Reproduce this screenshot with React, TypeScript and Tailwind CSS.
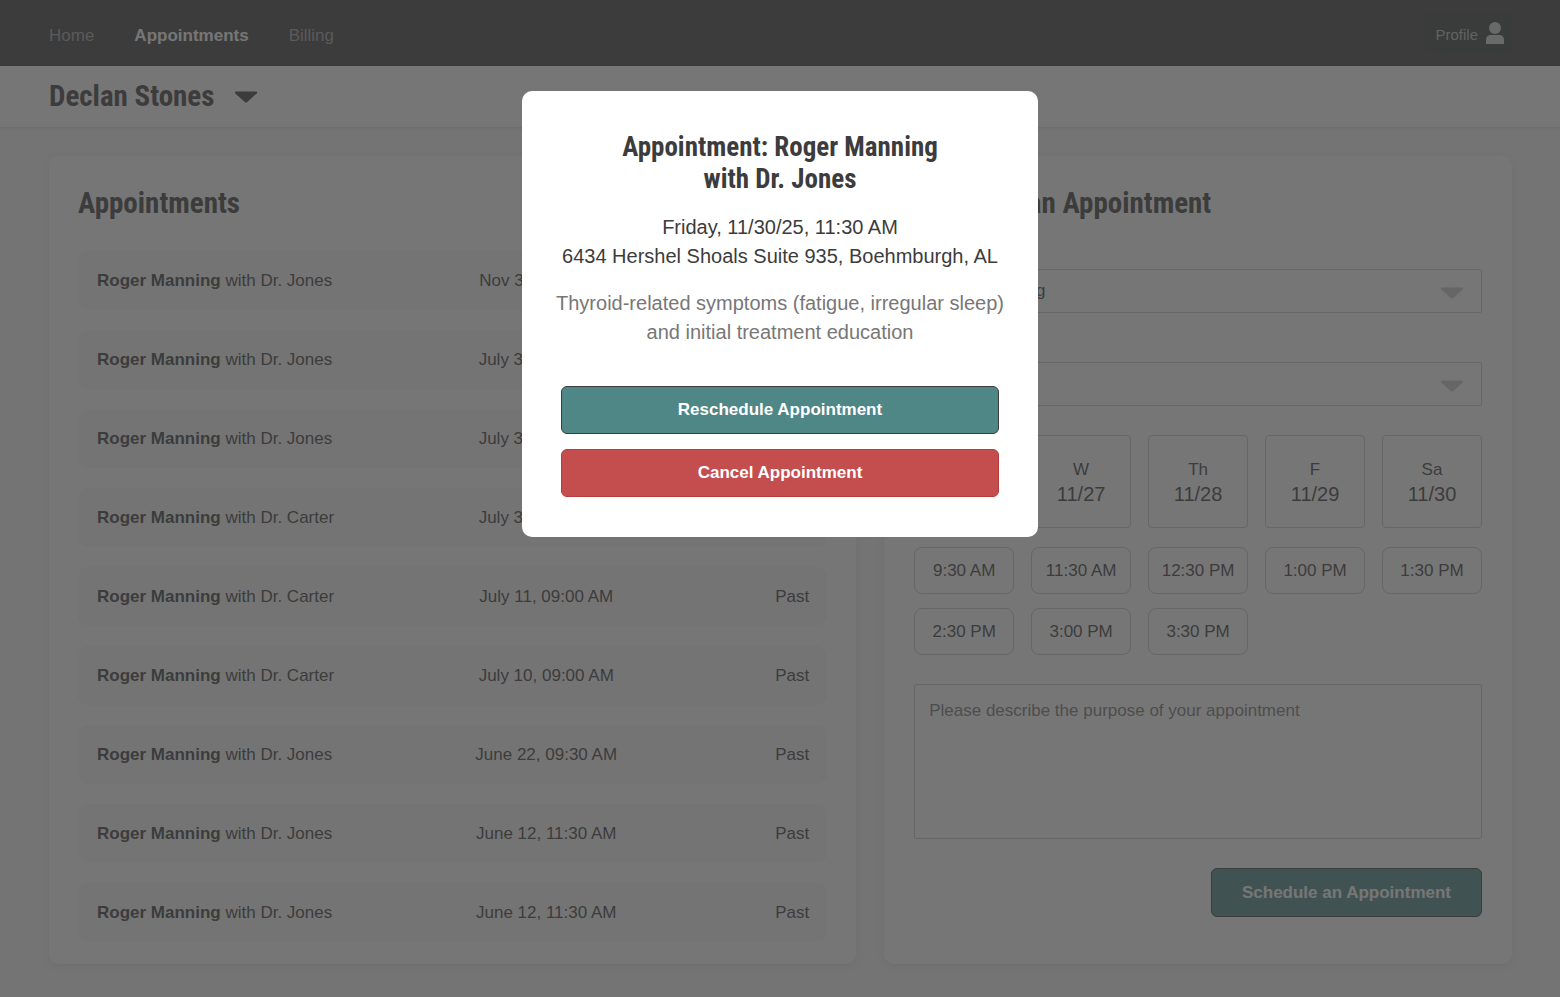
import React, { useState } from 'react';

interface Appointment {
  patient: string;
  doctor: string;
  date: string;
  status: string;
}

const appointments: Appointment[] = [
  { patient: 'Roger Manning', doctor: 'Dr. Jones', date: 'Nov 30, 11:30 AM', status: '' },
  { patient: 'Roger Manning', doctor: 'Dr. Jones', date: 'July 31, 09:00 AM', status: 'Past' },
  { patient: 'Roger Manning', doctor: 'Dr. Jones', date: 'July 31, 09:00 AM', status: 'Past' },
  { patient: 'Roger Manning', doctor: 'Dr. Carter', date: 'July 30, 09:00 AM', status: 'Past' },
  { patient: 'Roger Manning', doctor: 'Dr. Carter', date: 'July 11, 09:00 AM', status: 'Past' },
  { patient: 'Roger Manning', doctor: 'Dr. Carter', date: 'July 10, 09:00 AM', status: 'Past' },
  { patient: 'Roger Manning', doctor: 'Dr. Jones', date: 'June 22, 09:30 AM', status: 'Past' },
  { patient: 'Roger Manning', doctor: 'Dr. Jones', date: 'June 12, 11:30 AM', status: 'Past' },
  { patient: 'Roger Manning', doctor: 'Dr. Jones', date: 'June 12, 11:30 AM', status: 'Past' },
];

const days = [
  { day: 'T', date: '11/26' },
  { day: 'W', date: '11/27' },
  { day: 'Th', date: '11/28' },
  { day: 'F', date: '11/29' },
  { day: 'Sa', date: '11/30' },
];

const times = ['9:30 AM', '11:30 AM', '12:30 PM', '1:00 PM', '1:30 PM', '2:30 PM', '3:00 PM', '3:30 PM'];

const CaretDown: React.FC<{ className?: string }> = ({ className }) => (
  <svg viewBox="0 0 24 12" className={`w-6 h-3 ${className ?? ''}`} fill="currentColor" aria-hidden="true">
    <path d="M2 0.5h20c1.200 0 1.400 1.200 0.700 1.900L13 11.200c-0.600 0.500-1.400 0.500-2 0L1.300 2.400C0.600 1.700 0.800 0.500 2 0.500z" />
  </svg>
);

const Navbar: React.FC = () => (
  <nav className="flex items-center justify-between h-[66px] bg-[#3c3c3c] pl-[49px] pr-12">
    <div className="flex items-center gap-10 pt-[6px] text-[17px] text-[#a0a0a0]">
      <a href="#home">Home</a>
      <a href="#appointments" className="font-bold text-white">Appointments</a>
      <a href="#billing">Billing</a>
    </div>
    <a href="#profile" className="flex items-center gap-2 h-10 pl-[10px] pr-2 rounded-md bg-[#323c38] text-[15px] text-[#bbbbbb]">
      <span className="pt-1">Profile</span>
      <svg viewBox="0 0 18 22" className="w-[18px] h-[22px] text-[#d2d2d2]" fill="currentColor" aria-hidden="true">
        <circle cx="9" cy="6" r="6" />
        <path d="M0 22v-4.500a4.500 4.500 0 0 1 4.500-4.500h9a4.500 4.500 0 0 1 4.500 4.500V22z" />
      </svg>
    </a>
  </nav>
);

const AppointmentList: React.FC = () => (
  <section className="bg-white rounded-[10px] shadow-[0_2px_8px_rgba(0,0,0,0.08)] px-[29px] pt-[29px] pb-5">
    <h2 className="font-['Roboto_Condensed','Liberation_Sans',sans-serif] font-bold text-[29px] leading-9">Appointments</h2>
    <table className="w-full table-fixed border-separate border-spacing-x-0 border-spacing-y-5 mt-[10px] -mb-5">
      <tbody>
        {appointments.map((item, index) => (
          <tr key={index} className="h-[59px]">
            <td className="w-[45%] pl-[19px] bg-[#f7f7f7] rounded-l-[10px]">
              <span className="font-bold">{item.patient}</span> with {item.doctor}
            </td>
            <td className="w-[35%] text-center bg-[#f7f7f7]">{item.date}</td>
            <td className="pr-[18px] text-right bg-[#f7f7f7] rounded-r-[10px]">{item.status}</td>
          </tr>
        ))}
      </tbody>
    </table>
  </section>
);

interface SelectFieldProps {
  label: string;
  options: string[];
}

const SelectField: React.FC<SelectFieldProps> = ({ label, options }) => (
  <div className="relative">
    <select aria-label={label} className="block appearance-none w-full h-11 px-[14px] border border-[#c8c8c8] rounded-xs bg-white">
      {options.map((option) => (
        <option key={option}>{option}</option>
      ))}
    </select>
    <CaretDown className="absolute right-[18px] top-[18px] text-[#c8c8c8] pointer-events-none" />
  </div>
);

const ScheduleForm: React.FC = () => (
  <section className="bg-white rounded-[10px] shadow-[0_2px_8px_rgba(0,0,0,0.08)] px-[30px] pt-[29px] pb-[47px]">
    <h2 className="font-['Roboto_Condensed','Liberation_Sans',sans-serif] font-bold text-[29px] leading-9">Schedule an Appointment</h2>

    <div className="flex flex-col gap-[49px] mt-12">
      <SelectField label="Patient" options={['Roger Manning', 'Declan Stones']} />
      <SelectField label="Doctor" options={['Dr. Jones', 'Dr. Carter']} />
    </div>

    {/* Days */}
    <div className="grid grid-cols-5 gap-[17px] mt-[29px]">
      {days.map(({ day, date }) => (
        <button key={date} type="button" className="h-[93px] border border-[#c8c8c8] rounded-sm leading-6">
          <span className="block">{day}</span>
          <span className="block text-[20px]">{date}</span>
        </button>
      ))}
    </div>

    {/* Time slots */}
    <div className="grid grid-cols-5 gap-x-[17px] gap-y-[14px] mt-[19px]">
      {times.map((time) => (
        <button key={time} type="button" className="h-[47px] border border-[#c8c8c8] rounded-lg whitespace-nowrap">
          {time}
        </button>
      ))}
    </div>

    <textarea
      aria-label="Purpose of your appointment"
      placeholder="Please describe the purpose of your appointment"
      className="block w-full h-[155px] mt-[29px] px-[14px] py-4 leading-5 border border-[#c8c8c8] rounded-xs resize-none placeholder:text-[#777777]"
    />

    <div className="flex justify-end mt-[29px]">
      <button type="submit" className="h-[49px] px-[30px] rounded-md border border-[#3c3c3c] bg-[#4f8787] text-white font-bold">
        Schedule an Appointment
      </button>
    </div>
  </section>
);

const AppointmentModal: React.FC<{ onClose: () => void }> = ({ onClose }) => (
  <div className="fixed inset-0 flex items-start justify-center bg-[#3c3c3c]/70 pt-[91px]">
    <div role="dialog" aria-modal="true" aria-labelledby="modal-title" className="w-[516px] bg-white rounded-[10px] px-[39px] py-10 text-center">
      <h2 id="modal-title" className="font-['Roboto_Condensed','Liberation_Sans',sans-serif] font-bold text-[27px] leading-8">
        Appointment: Roger Manning
        <br />
        with Dr. Jones
      </h2>
      <div className="flex flex-col gap-[18px] mt-[18px] -mx-2 text-[20px] leading-[29px] whitespace-nowrap">
        <p>
          Friday, 11/30/25, 11:30 AM
          <br />
          6434 Hershel Shoals Suite 935, Boehmburgh, AL
        </p>
        <p className="text-[#777777]">
          Thyroid-related symptoms (fatigue, irregular sleep)
          <br />
          and initial treatment education
        </p>
      </div>
      <div className="flex flex-col gap-[15px] mt-[39px] font-bold text-white">
        <button type="button" onClick={onClose} className="h-12 rounded-md border border-[#3c3c3c] bg-[#4f8787]">
          Reschedule Appointment
        </button>
        <button type="button" onClick={onClose} className="h-12 rounded-md border border-[#b83c3c] bg-[#c44e4e]">
          Cancel Appointment
        </button>
      </div>
    </div>
  </div>
);

const App: React.FC = () => {
  const [showModal, setShowModal] = useState(true);

  return (
    <div className="min-h-screen bg-[#f7f7f7] font-['Liberation_Sans',sans-serif] text-[17px] text-[#3c3c3c]">
      <Navbar />
      <header className="flex items-center h-[61px] bg-white pl-[49px] shadow-[0_1px_4px_rgba(0,0,0,0.12)]">
        <button type="button" className="flex items-center gap-5 font-['Roboto_Condensed','Liberation_Sans',sans-serif] font-bold text-[29px]">
          Declan Stones
          <CaretDown />
        </button>
      </header>
      <main className="grid grid-cols-[9fr_7fr] gap-7 pl-[49px] pr-12 pt-[29px] pb-[34px]">
        <AppointmentList />
        <ScheduleForm />
      </main>
      {showModal && <AppointmentModal onClose={() => setShowModal(false)} />}
    </div>
  );
};

export default App;
